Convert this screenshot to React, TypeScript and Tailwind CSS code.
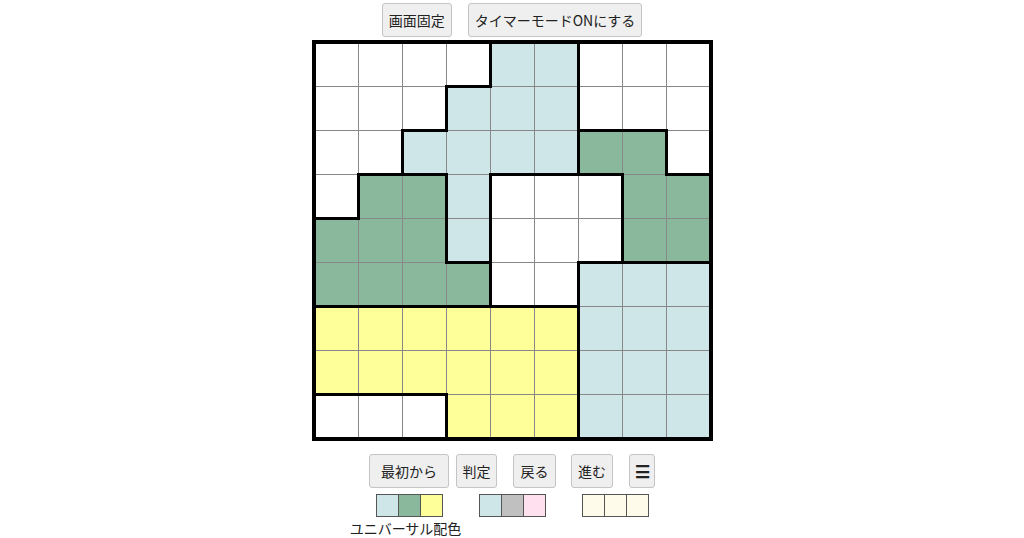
const FONT = "font-['Noto_Sans_CJK_JP','Noto_Sans',sans-serif]";

const COLORS: Record<string, string> = {
  W: "#ffffff",
  L: "#cfe6e8",
  G: "#8ab89d",
  Y: "#ffff99",
};

const BOARD = [
  "WWWWLLWWW",
  "WWWLLLWWW",
  "WWLLLLGGW",
  "WGGLWWWGG",
  "GGGLWWWGG",
  "GGGGWWLLL",
  "YYYYYYLLL",
  "YYYYYYLLL",
  "WWWYYYLLL",
];

const CELL = 44;
const OFF = 2.5;

function Button({ label, className = "" }: { label: string; className?: string }) {
  return (
    <button className={`h-[34px] whitespace-nowrap rounded-[3px] border border-[#c4c4c4] bg-[#efefef] text-[#222] ${className}`}>
      {label}
    </button>
  );
}

function Board() {
  const thick: { x1: number; y1: number; x2: number; y2: number }[] = [];
  for (let r = 0; r < 9; r++) {
    for (let c = 0; c < 9; c++) {
      if (c < 8 && BOARD[r][c] !== BOARD[r][c + 1]) {
        const x = OFF + CELL * (c + 1);
        thick.push({ x1: x, y1: OFF + CELL * r, x2: x, y2: OFF + CELL * (r + 1) });
      }
      if (r < 8 && BOARD[r][c] !== BOARD[r + 1][c]) {
        const y = OFF + CELL * (r + 1);
        thick.push({ x1: OFF + CELL * c, y1: y, x2: OFF + CELL * (c + 1), y2: y });
      }
    }
  }
  const thin = Array.from({ length: 8 }, (_, i) => OFF + CELL * (i + 1));

  return (
    <div className="relative mx-auto h-[401px] w-[401px]">
      <div className="grid grid-cols-[repeat(9,44px)] p-[2px]">
        {BOARD.flatMap((row, r) =>
          row.split("").map((k, c) => (
            <div key={`${r}-${c}`} className="h-[44px] w-[44px]" style={{ backgroundColor: COLORS[k] }} />
          )),
        )}
      </div>
      <svg className="absolute inset-0" width="401" height="401" viewBox="0 0 401 401">
        {thin.map((p) => (
          <g key={p} stroke="#888" strokeWidth="1">
            <line x1={2} y1={p} x2={399} y2={p} />
            <line x1={p} y1={2} x2={p} y2={399} />
          </g>
        ))}
        {thick.map((l, i) => (
          <line key={i} {...l} stroke="#000" strokeWidth="3" strokeLinecap="square" />
        ))}
        <rect x="2" y="2" width="397" height="397" fill="none" stroke="#000" strokeWidth="4" />
      </svg>
    </div>
  );
}

function Swatches({ colors, label }: { colors: string[]; label?: string }) {
  return (
    <div className="flex flex-col items-center">
      <div className="flex">
        {colors.map((c, i) => (
          <div
            key={i}
            className={`h-[23px] w-[23px] border border-[#555] ${i > 0 ? "-ml-px" : ""}`}
            style={{ backgroundColor: c }}
          />
        ))}
      </div>
      <div className="flex h-[22px] w-0 justify-center pt-[3px]">
        {label && <span className="-ml-[7px] whitespace-nowrap text-[14px] leading-[17px] text-[#222]">{label}</span>}
      </div>
    </div>
  );
}

export default function App() {
  return (
    <div className={`h-[538px] w-[1024px] overflow-hidden bg-white ${FONT}`}>
      <div className="flex justify-center gap-[16px] pt-[3px]">
        <Button label="画面固定" className="px-[6px] text-[14px]" />
        <Button label="タイマーモードONにする" className="px-[6px] text-[14px]" />
      </div>
      <div className="mt-[3px]">
        <Board />
      </div>
      <div className="mt-[13px] flex justify-center">
        <Button label="最初から" className="w-[80px] text-[14px]" />
        <Button label="判定" className="ml-[7px] w-[41px] text-[14px]" />
        <Button label="戻る" className="ml-[16px] w-[43px] text-[14px]" />
        <Button label="進む" className="ml-[15px] w-[42px] text-[14px]" />
        <Button label="☰" className="ml-[16px] w-[26px] text-[17px] font-bold" />
      </div>
      <div className="mt-[6px] flex justify-center gap-[36px]">
        <Swatches colors={["#cfe6e8", "#8ab89d", "#ffff99"]} label="ユニバーサル配色" />
        <Swatches colors={["#cfe6e8", "#c0c0c0", "#ffe0ef"]} />
        <Swatches colors={["#fffbeb", "#fffbeb", "#fffbeb"]} />
      </div>
    </div>
  );
}
